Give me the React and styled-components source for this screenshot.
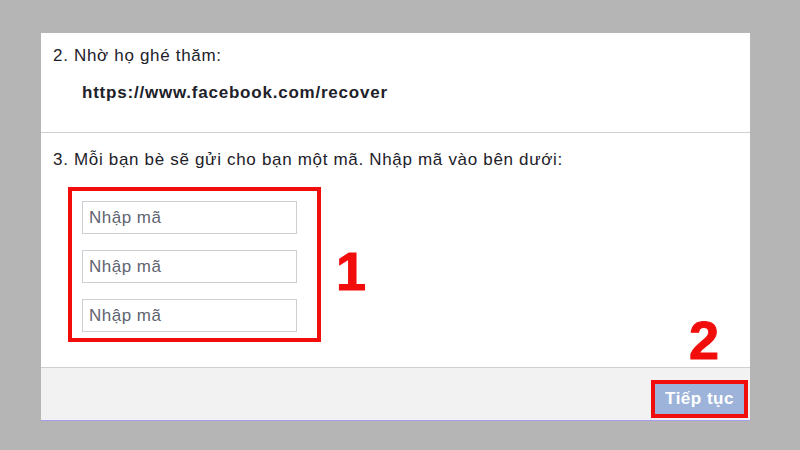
import styled, { createGlobalStyle } from 'styled-components';

const GlobalStyle = createGlobalStyle`
  html, body {
    margin: 0;
    padding: 0;
    background: #b5b5b5;
    font-family: "Liberation Sans", Arial, sans-serif;
  }
`;

const Page = styled.div`
  width: 800px;
  height: 450px;
  padding: 33px 0 0 41px;
  box-sizing: border-box;
  overflow: hidden;
`;

const Panel = styled.div`
  position: relative;
  width: 709px;
  background: #fff;
  border-bottom: 1px solid #a99cf0;
`;

const Section = styled.div`
  box-sizing: border-box;
  height: ${(p) => p.$height}px;
  padding: ${(p) => p.$pad};
  border-bottom: 1px solid #d0d0d0;
`;

const StepText = styled.p`
  margin: 0;
  font-size: 17px;
  letter-spacing: 0.68px;
  line-height: 20px;
  color: #1d2129;
`;

const Link = styled.p`
  margin: 17px 0 0 29px;
  font-size: 17px;
  font-weight: bold;
  letter-spacing: 0.78px;
  line-height: 20px;
  color: #1d2129;
`;

const CodeRow = styled.div`
  display: flex;
  align-items: center;
  gap: 15px;
  margin: 17px 0 0 15px;
`;

const Highlight = styled.div`
  display: flex;
  flex-direction: column;
  gap: 16px;
  width: 253px;
  box-sizing: border-box;
  padding: 10px 20px 6px 10px;
  border: 4px solid #f20d0d;
`;

const CodeInput = styled.input`
  box-sizing: border-box;
  width: 215px;
  height: 33px;
  padding: 0 6px;
  border: 1px solid #ccd0d5;
  border-radius: 0;
  font-family: "Liberation Sans", Arial, sans-serif;
  font-size: 17px;
  letter-spacing: 0.5px;
  color: #1d2129;
  outline: none;

  &::placeholder {
    color: #5f6470;
  }
`;

const Marker = styled.span`
  font-family: "Liberation Sans", Arial, sans-serif;
  font-weight: 900;
  font-size: 54px;
  line-height: 1;
  color: #f20d0d;
  -webkit-text-stroke: 1px #f20d0d;
`;

const SideMarker = styled(Marker)`
  margin-top: 12px;
`;

const CornerMarker = styled(Marker)`
  position: absolute;
  right: 31px;
  bottom: 53px;
`;

const Footer = styled.div`
  display: flex;
  justify-content: flex-end;
  align-items: flex-end;
  box-sizing: border-box;
  height: 52px;
  padding: 0 2px 2px 0;
  background: #f2f2f2;
`;

const ButtonFrame = styled.div`
  border: 4px solid #f20d0d;
`;

const Button = styled.button`
  display: block;
  width: 89px;
  height: 30px;
  padding: 0;
  border: none;
  background: #9db3d9;
  color: #fff;
  font-family: "Liberation Sans", Arial, sans-serif;
  font-size: 17px;
  font-weight: bold;
  letter-spacing: 0.5px;
`;

export default function App() {
  return (
    <>
      <GlobalStyle />
      <Page>
        <Panel>
          <Section $height={100} $pad="13px 12px">
            <StepText>2. Nhờ họ ghé thăm:</StepText>
            <Link>https://www.facebook.com/recover</Link>
          </Section>
          <Section $height={235} $pad="17px 12px">
            <StepText>3. Mỗi bạn bè sẽ gửi cho bạn một mã. Nhập mã vào bên dưới:</StepText>
            <CodeRow>
              <Highlight>
                <CodeInput placeholder="Nhập mã" />
                <CodeInput placeholder="Nhập mã" />
                <CodeInput placeholder="Nhập mã" />
              </Highlight>
              <SideMarker>1</SideMarker>
            </CodeRow>
          </Section>
          <CornerMarker>2</CornerMarker>
          <Footer>
            <ButtonFrame>
              <Button>Tiếp tục</Button>
            </ButtonFrame>
          </Footer>
        </Panel>
      </Page>
    </>
  );
}
